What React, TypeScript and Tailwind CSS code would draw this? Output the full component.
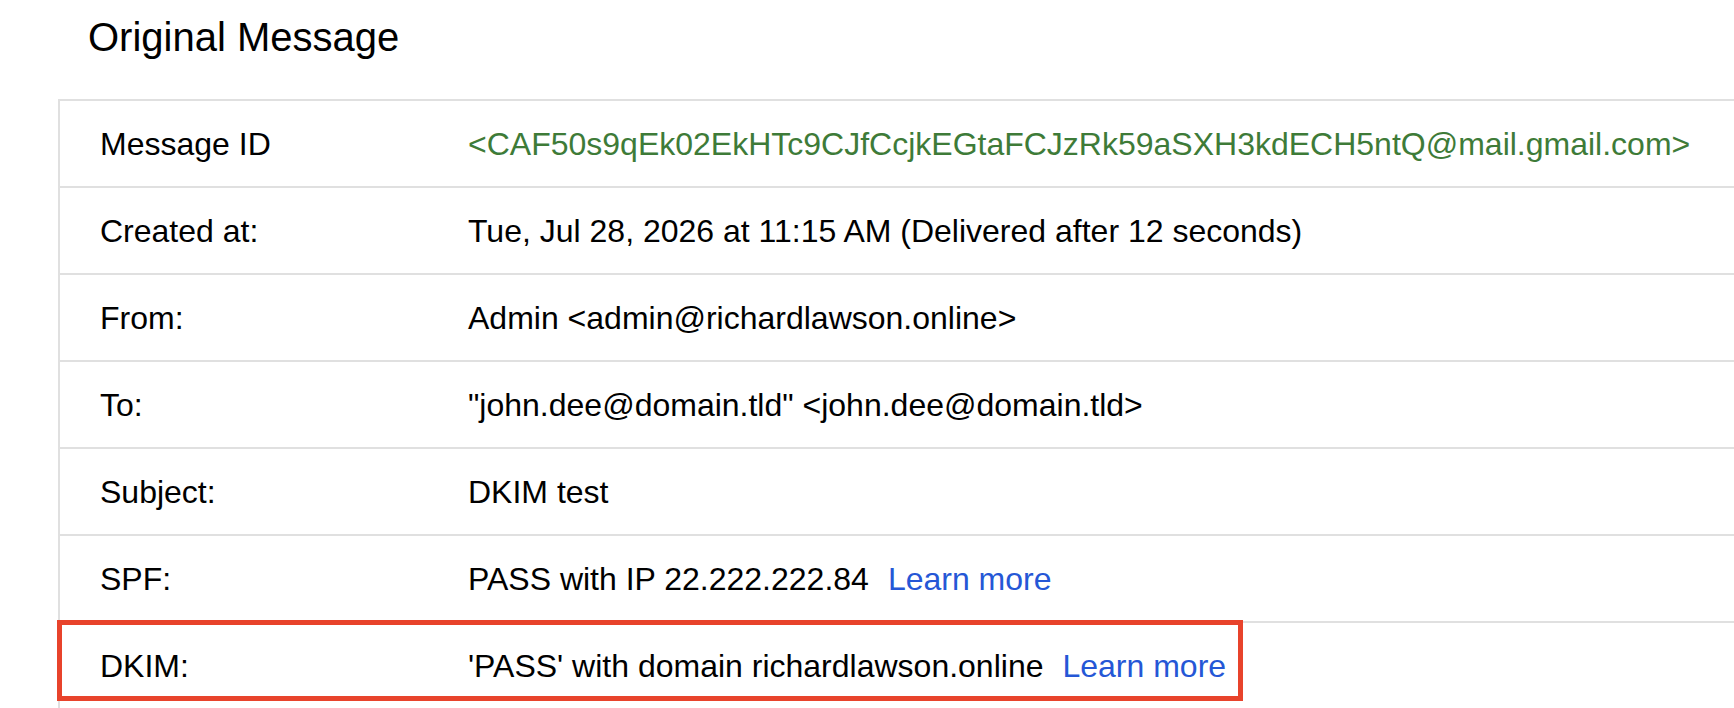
import React from 'react';

interface Row {
  label: string;
  value: React.ReactNode;
  highlight?: boolean;
}

const LearnMore = () => (
  <a className="ml-[19px] text-[#2557d6] no-underline cursor-pointer">Learn more</a>
);

const rows: Row[] = [
  {
    label: 'Message ID',
    value: (
      <span className="text-[#3e7b38]">
        &lt;CAF50s9qEk02EkHTc9CJfCcjkEGtaFCJzRk59aSXH3kdECH5ntQ@mail.gmail.com&gt;
      </span>
    ),
  },
  { label: 'Created at:', value: 'Tue, Jul 28, 2026 at 11:15 AM (Delivered after 12 seconds)' },
  { label: 'From:', value: 'Admin <admin@richardlawson.online>' },
  { label: 'To:', value: '"john.dee@domain.tld" <john.dee@domain.tld>' },
  { label: 'Subject:', value: 'DKIM test' },
  {
    label: 'SPF:',
    value: (
      <>
        PASS with IP 22.222.222.84
        <LearnMore />
      </>
    ),
  },
  {
    label: 'DKIM:',
    value: (
      <>
        'PASS' with domain richardlawson.online
        <LearnMore />
      </>
    ),
    highlight: true,
  },
  { label: '', value: '' },
];

const App: React.FC = () => {
  return (
    <div
      className="w-[1734px] h-[708px] overflow-hidden bg-white text-black"
      style={{ fontFamily: '"Liberation Sans", Arial, sans-serif' }}
    >
      {/* Title */}
      <h1 className="pl-[88px] pt-[14px] h-[99px] text-[40px] leading-[46px] font-normal">Original Message</h1>

      {/* Header table */}
      <div className="ml-[58px] w-[1760px] border-l-2 border-[#e0e0e0]">
        {rows.map((row, i) => (
          <div key={i} className="relative flex items-center h-[87px] border-t-2 border-[#e0e0e0] text-[32px]">
            <div className="w-[408px] pl-[40px] shrink-0">{row.label}</div>
            <div className="whitespace-pre">{row.value}</div>
            {row.highlight && (
              <span className="absolute left-[-3px] top-[-3px] w-[1186px] h-[81px] border-[5px] border-[#e8432b] pointer-events-none" />
            )}
          </div>
        ))}
      </div>
    </div>
  );
};

export default App;
